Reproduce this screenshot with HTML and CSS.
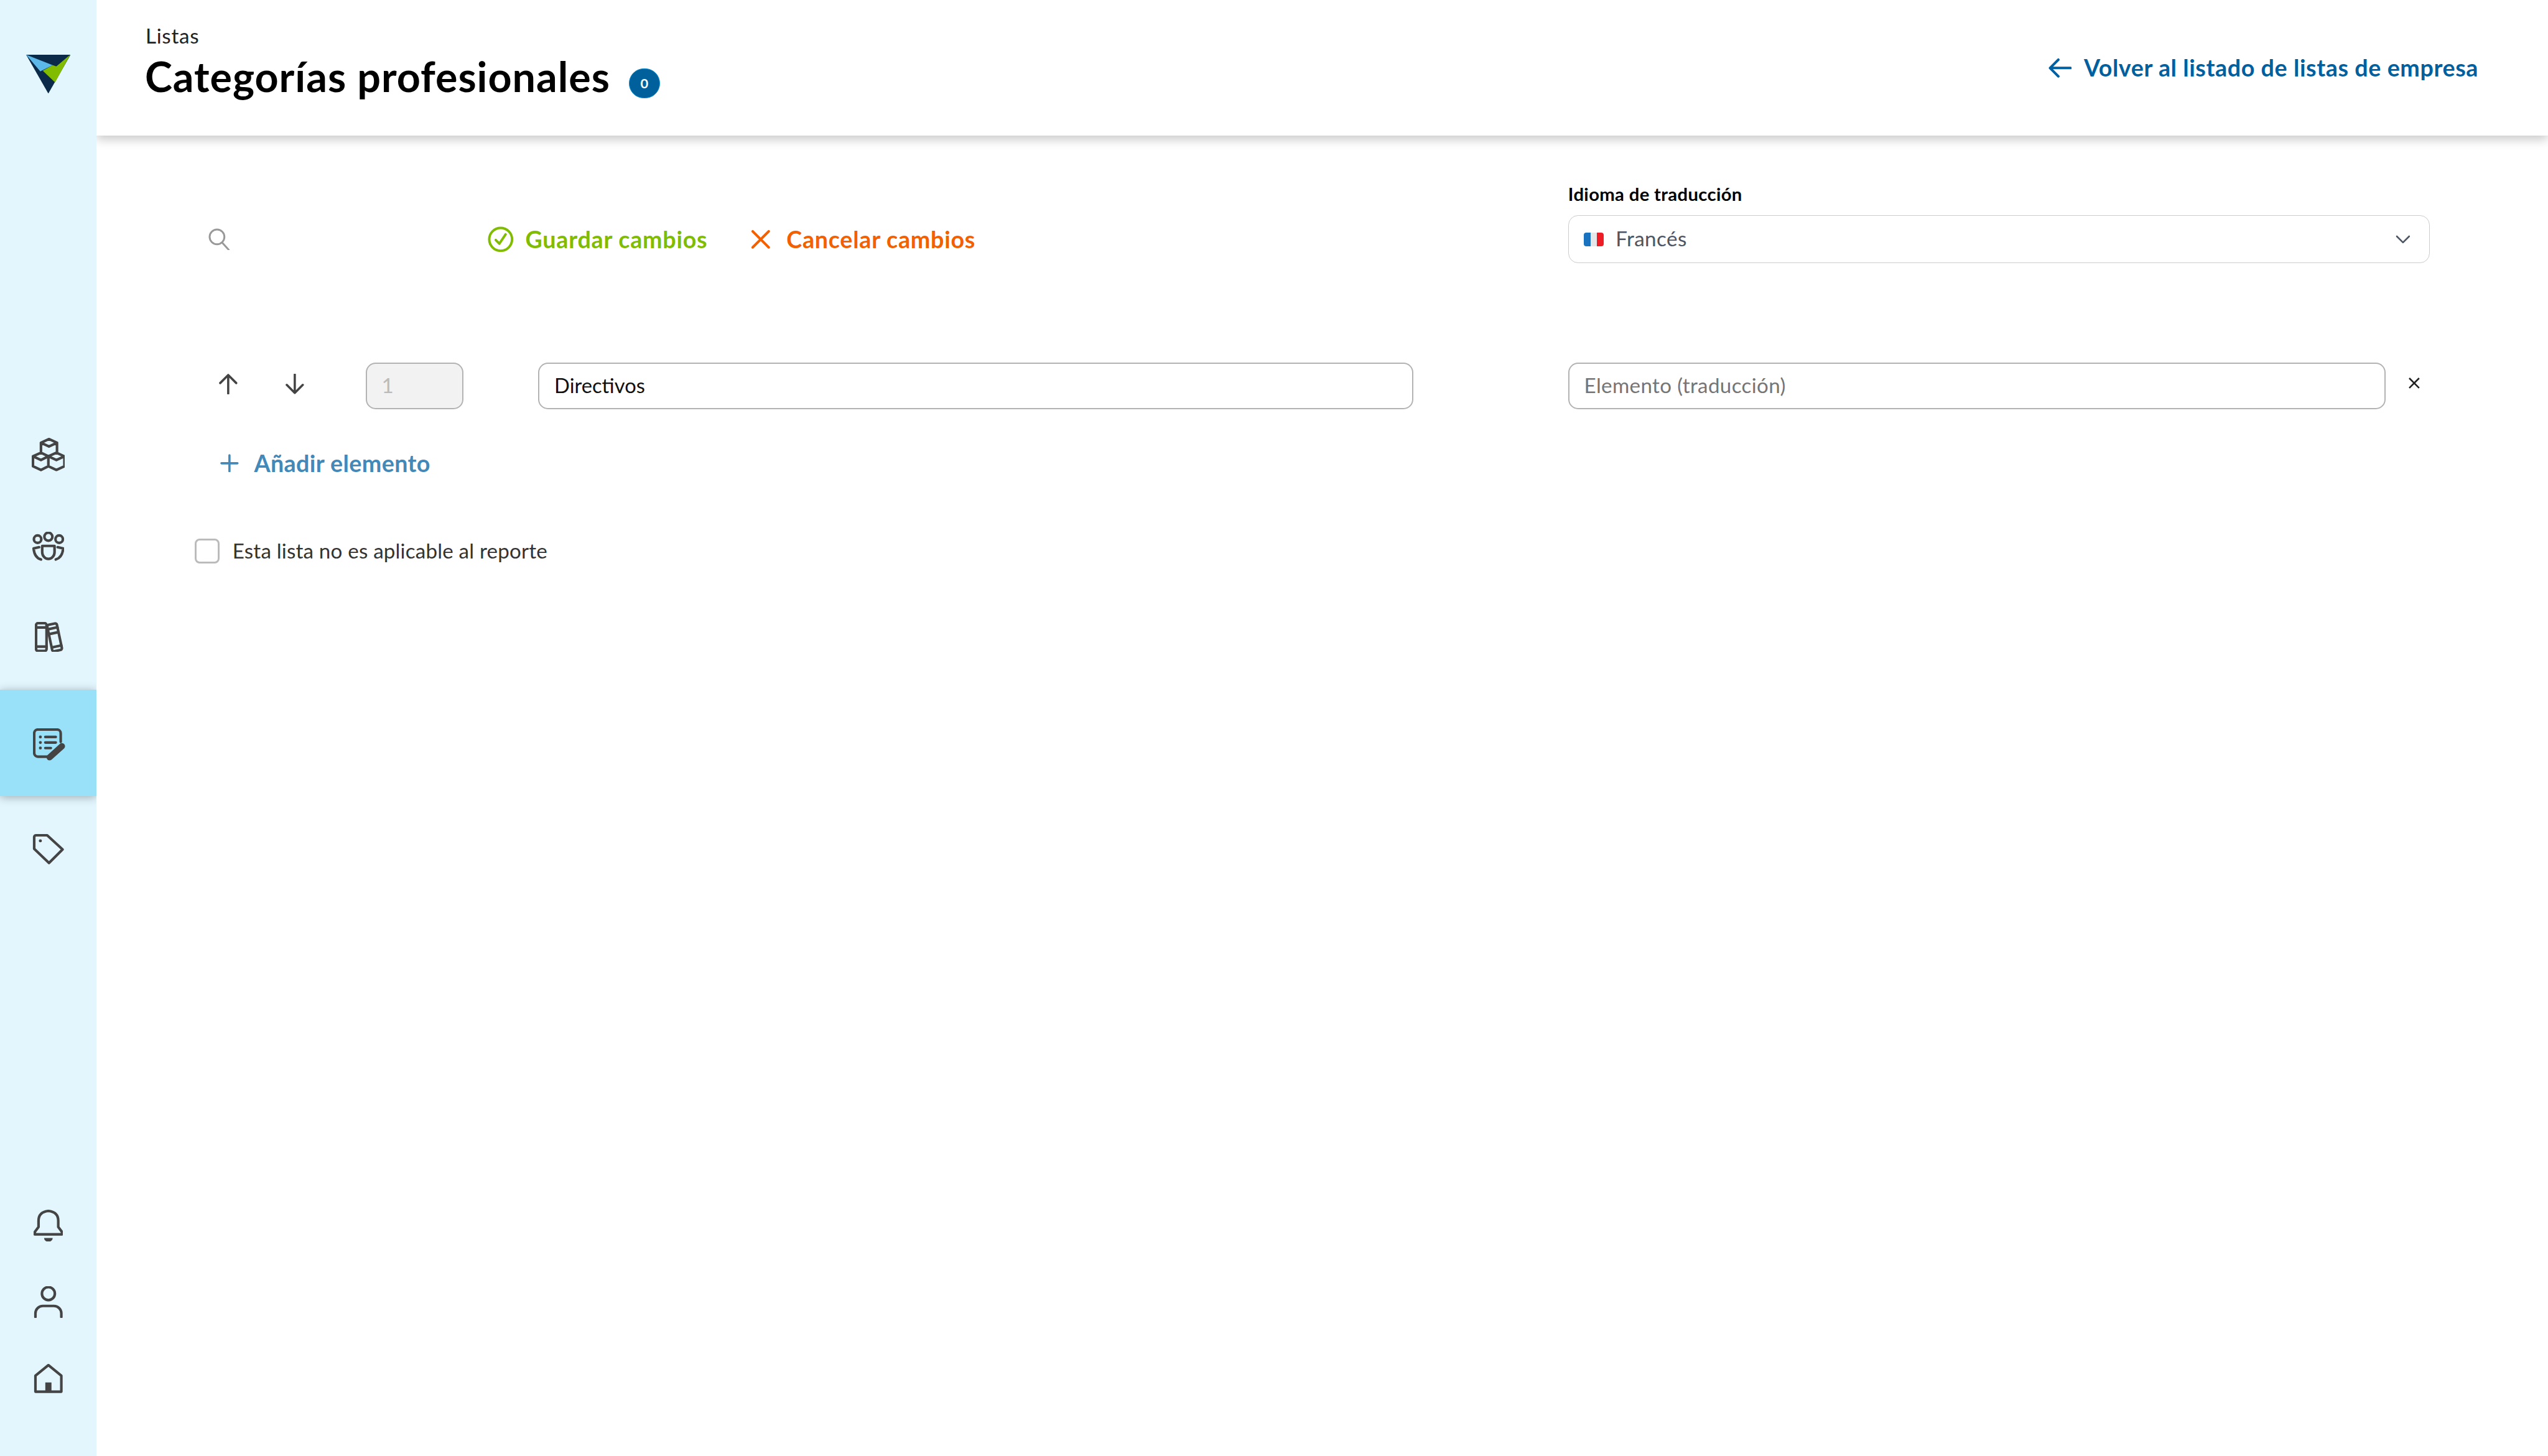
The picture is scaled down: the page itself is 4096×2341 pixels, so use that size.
FILE: index.html
```html
<!DOCTYPE html>
<html lang="es">
<head>
<meta charset="utf-8">
<title>Categorías profesionales</title>
<link rel="stylesheet" href="styles.css">
</head>
<body>
<div class="app">
  <aside class="sidebar">
    <div class="logo">
      <svg width="72" height="63" viewBox="0 0 72 63"><polygon points="0,0 72,0 36,63" fill="#0b2a4a"/><polygon points="0,0 43,17 23,27" fill="#5cb8e8"/><polygon points="71.5,0 49,19 43,17 27,26 47,45" fill="#82bc00"/></svg>
    </div>
    <nav class="nav">
      <a class="nav-item"><svg width="54" height="54" viewBox="-1 -1 54 54" class="ico"><path d="M27 1 40 7 27 13 14 7ZM14 7V23M40 7V23M14 23 1 29 14 35 26 29ZM39 23 52 29 39 35 26 29ZM1 29V45L14 51 26 45V29M26 45 39 51 52 45V29"/></svg></a>
      <a class="nav-item nudge-down"><svg width="52" height="47" viewBox="0 0 52 47" class="ico"><circle cx="8.5" cy="12" r="6"/><circle cx="26" cy="8" r="6.5"/><circle cx="43.5" cy="12" r="6"/><path d="M16 23H36V33A10 11 0 0 1 16 33ZM11 25 2 27C3 38 7 43 14 45M41 25 50 27C49 38 45 43 38 45"/></svg></a>
      <a class="nav-item nudge-down nudge-right"><svg width="47" height="49" viewBox="0 0 47 49" class="ico"><rect x="2" y="2" width="17" height="45" rx="3"/><path d="M2 9H19M2 40H19"/><g transform="rotate(-12 32 25)"><rect x="24" y="3" width="16" height="44" rx="3"/><path d="M24 10H40M24 18H40M24 40H40"/></g></svg></a>
      <a class="nav-item active"><svg width="53" height="53" viewBox="0 0 53 53" class="ico"><path d="M24 46H8A6 6 0 0 1 2 40V8A6 6 0 0 1 8 2H39A6 6 0 0 1 45 8V22"/><path d="M20 14H37M20 23H37M20 32H29"/><circle cx="12" cy="14" r="2.4" class="fill"/><circle cx="12" cy="23" r="2.4" class="fill"/><circle cx="12" cy="32" r="2.4" class="fill"/><path d="M27 47 47 29" class="pen"/></svg></a>
      <a class="nav-item"><svg width="52" height="52" viewBox="0 0 52 52" class="ico"><path d="M3 6A3 3 0 0 1 6 3H24L49 26 27 48 3 25Z"/><circle cx="13" cy="12" r="2.5" class="fill"/></svg></a>
    </nav>
    <nav class="nav-bottom">
      <a class="nav-item-small"><svg width="48" height="52" viewBox="0 0 48 52" class="ico"><path d="M24 2C14 3 8 8 8 18V28L2 36V40H46V36L40 28V18C40 8 34 3 24 2Z"/><path d="M17 46H31A7 6 0 0 1 17 46Z" class="fill"/></svg></a>
      <a class="nav-item-small"><svg width="48" height="52" viewBox="0 0 48 52" class="ico"><circle cx="24" cy="12" r="10.5"/><path d="M3 50V44A12 12 0 0 1 15 32H33A12 12 0 0 1 45 44V50"/></svg></a>
      <a class="nav-item-small"><svg width="48" height="48" viewBox="0 0 48 48" class="ico"><path d="M24 2 3 19V45H45V19Z"/><rect x="19" y="30" width="10" height="15" class="fill"/></svg></a>
    </nav>
  </aside>
  <main class="main">
    <header class="header">
      <div class="heading">
        <div class="eyebrow">Listas</div>
        <div class="title-row">
          <h1 class="title">Categorías profesionales</h1>
          <span class="badge">0</span>
        </div>
      </div>
      <a class="back-link">
        <svg width="38" height="33" viewBox="0 0 38 33" class="back-ico"><path d="M36 16.5H3M16 3 2.5 16.5 16 30"/></svg>
        <span>Volver al listado de listas de empresa</span>
      </a>
    </header>
    <section class="content">
      <div class="toolbar">
        <div class="actions">
          <div class="search"><svg width="36" height="36" viewBox="0 0 36 36" class="search-ico"><circle cx="15" cy="14" r="12"/><path d="M24 24 34 35"/></svg></div>
          <a class="action save"><svg width="42" height="42" viewBox="0 0 42 42" class="save-ico"><circle cx="21" cy="21" r="18.5"/><path d="M13 22 19 28 29 13"/></svg><span>Guardar cambios</span></a>
          <a class="action cancel"><svg width="32" height="32" viewBox="0 0 32 32" class="cancel-ico"><path d="M3 3 29 29M29 3 3 29"/></svg><span>Cancelar cambios</span></a>
        </div>
        <div class="lang">
          <label class="lang-label">Idioma de traducción</label>
          <div class="select">
            <span class="flag"><i class="fb"></i><i class="fw"></i><i class="fr"></i></span>
            <span class="select-text">Francés</span>
            <svg width="24" height="14" viewBox="0 0 24 14" class="chev"><path d="M2 2 12 12 22 2"/></svg>
          </div>
        </div>
      </div>
      <div class="row">
        <div class="row-left">
          <svg width="32" height="33" viewBox="0 0 32 33" class="arrow"><path d="M16 32V2M3 15 16 2 29 15"/></svg>
          <svg width="32" height="33" viewBox="0 0 32 33" class="arrow arrow-down"><path d="M16 1V31M3 18 16 31 29 18"/></svg>
          <div class="field field-num">1</div>
          <div class="field field-main">Directivos</div>
        </div>
        <div class="row-right">
          <div class="field field-trans">Elemento (traducción)</div>
          <svg width="20" height="20" viewBox="0 0 20 20" class="remove"><path d="M2 2 18 18M18 2 2 18"/></svg>
        </div>
      </div>
      <a class="add"><svg width="30" height="30" viewBox="0 0 30 30" class="add-ico"><path d="M15 2V28M2 15H28"/></svg><span>Añadir elemento</span></a>
      <label class="check"><span class="box"></span><span>Esta lista no es aplicable al reporte</span></label>
    </section>
  </main>
</div>
</body>
</html>
```
FILE: styles.css
```css
* { box-sizing: border-box; }
html, body { margin: 0; padding: 0; background: #fff; overflow: hidden; }
body { font-family: "Lato", "Liberation Sans", sans-serif; color: #222; }
.app { zoom: 0.99129; width: 4132px; height: 2362px; display: flex; }
a { display: block; }

.sidebar { width: 156px; flex: none; background: #e3f6fe; display: flex; flex-direction: column; align-items: stretch; position: relative; z-index: 2; overflow: hidden; }
.logo { height: 242px; display: flex; align-items: center; justify-content: center; padding-bottom: 2px; flex: none; }
.nav { margin-top: 422px; display: flex; flex-direction: column; flex: none; }
.nav-item { height: 147px; display: flex; align-items: center; justify-content: center; }
.nudge-down { padding-top: 3px; }
.nudge-right { padding-left: 3px; }
.nav-item.active { height: 172px; margin: 14px 0 13px; background: #99e1f9; box-shadow: 0 2px 14px rgba(0,0,0,.3); padding: 5px 0 0 4px; }
.nav-bottom { margin-top: auto; padding-bottom: 64px; display: flex; flex-direction: column; }
.nav-item-small { height: 124px; display: flex; align-items: center; justify-content: center; }
.ico { fill: none; stroke: #444; stroke-width: 4.2; stroke-linejoin: round; stroke-linecap: round; }
.ico .fill { fill: #444; stroke: none; }
.ico .pen { stroke-width: 10; }

.main { flex: 1; min-width: 0; display: flex; flex-direction: column; }
.header { height: 220px; flex: none; padding: 0 113px 0 79px; display: flex; justify-content: space-between; align-items: flex-start; background: #fff; box-shadow: 0 6px 16px rgba(0,0,0,.22); }
.heading { padding-top: 37px; }
.eyebrow { font-size: 33.5px; line-height: 42px; color: #222; letter-spacing: 0.7px; padding-left: 1px; }
.title-row { display: flex; align-items: center; margin-top: 5px; }
.title { margin: 0; font-size: 67px; line-height: 80px; font-weight: 700; color: #000; letter-spacing: 1px; }
.badge { width: 51px; height: 48px; margin: 22px 0 0 30px; border-radius: 24px; background: #00609c; border: 2px solid #0a8fd0; color: #fff; font-size: 22px; font-weight: 700; display: flex; align-items: center; justify-content: center; }
.back-link { margin-top: 88px; display: flex; align-items: center; gap: 20px; color: #005f9e; font-size: 38px; line-height: 44px; font-weight: 700; letter-spacing: 0.58px; }
.back-ico { fill: none; stroke: #005f9e; stroke-width: 4; stroke-linecap: round; stroke-linejoin: round; }

.content { padding: 77px 0 0 160px; display: flex; flex-direction: column; }
.toolbar { display: grid; grid-template-columns: 2227px 1397px; }
.actions { display: flex; align-items: center; align-self: end; height: 78px; padding-left: 21px; }
.search { width: 454px; display: flex; }
.search-ico { fill: none; stroke: #999; stroke-width: 3; stroke-linecap: round; }
.action { display: flex; align-items: center; font-size: 38px; font-weight: 700; line-height: 44px; letter-spacing: 0.75px; }
.save { color: #80bc00; gap: 19px; }
.cancel { color: #f26000; gap: 26px; margin-left: 70px; }
.save-ico { fill: none; stroke: #80bc00; stroke-width: 4; stroke-linecap: round; stroke-linejoin: round; }
.cancel-ico { fill: none; stroke: #f26000; stroke-width: 4; stroke-linecap: round; }
.lang-label { display: block; font-size: 29.5px; line-height: 36px; font-weight: 700; color: #000; margin-bottom: 16px; letter-spacing: 0.35px; }
.select { height: 78px; border: 2px solid #ccc; border-radius: 16px; display: flex; align-items: center; padding: 0 30px 0 24px; background: #fff; }
.flag { width: 33px; height: 22px; border-radius: 4px; overflow: hidden; display: flex; margin-right: 19px; }
.flag i { flex: 1; display: block; }
.fb { background: #1a73bf; }
.fw { background: #e6e7e8; }
.fr { background: #ee1c25; }
.select-text { flex: 1; font-size: 33.5px; color: #4b5563; letter-spacing: 0.43px; padding-bottom: 3px; }
.chev { fill: none; stroke: #4b5563; stroke-width: 2.6; stroke-linecap: round; stroke-linejoin: round; }

.row { display: grid; grid-template-columns: 2227px 1397px; margin-top: 161px; }
.row-left { display: flex; align-items: center; padding: 0 251px 0 38px; }
.arrow { fill: none; stroke: #444; stroke-width: 3.6; stroke-linecap: round; stroke-linejoin: round; margin-top: -6px; }
.arrow-down { margin-left: 76px; margin-right: 99px; }
.field { height: 76px; border: 2.5px solid #b3b3b3; border-radius: 16px; display: flex; align-items: center; padding: 0 24px 3px; font-size: 33.5px; background: #fff; }
.field-num { width: 159px; flex: none; background: #f2f2f2; color: #bbb; margin-right: 121px; }
.field-main { flex: 1; color: #111; font-size: 33px; }
.row-right { display: flex; align-items: center; }
.field-trans { width: 1326px; flex: none; color: #757575; letter-spacing: 0.33px; }
.remove { margin: -9px 0 0 36px; fill: none; stroke: #222; stroke-width: 2.6; }
.add { margin: 62px 0 0 41px; height: 50px; display: flex; align-items: center; gap: 25px; color: #4289b9; font-size: 38px; font-weight: 700; letter-spacing: 0.4px; }
.add-ico { fill: none; stroke: #4289b9; stroke-width: 3.6; stroke-linecap: round; }
.check { margin-top: 98px; display: flex; align-items: center; gap: 21px; font-size: 33.5px; line-height: 40px; color: #333; letter-spacing: 0.18px; }
.box { width: 40px; height: 40px; border: 4px solid #bbb; border-radius: 8px; flex: none; }
```
